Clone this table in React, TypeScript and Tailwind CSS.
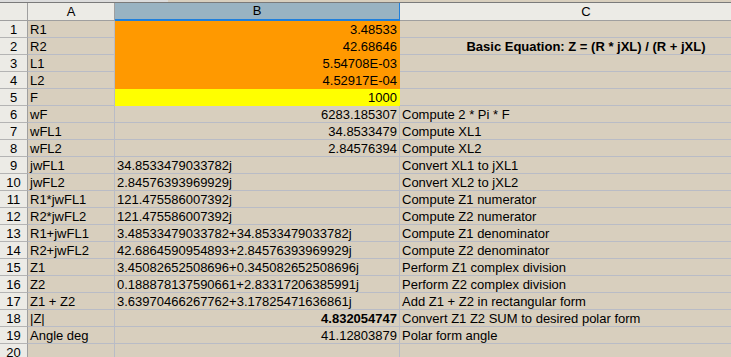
const rows: [string, string, "r" | "l" | "", string, string?][] = [
  ["R1", "3.48533", "r", "", "orange"],
  ["R2", "42.68646", "r", "", "orange"],
  ["L1", "5.54708E-03", "r", "", "orange"],
  ["L2", "4.52917E-04", "r", "", "orange"],
  ["F", "1000", "r", "", "yellow"],
  ["wF", "6283.185307", "r", "Compute 2 * Pi * F"],
  ["wFL1", "34.8533479", "r", "Compute XL1"],
  ["wFL2", "2.84576394", "r", "Compute XL2"],
  ["jwFL1", "34.8533479033782j", "l", "Convert XL1 to jXL1"],
  ["jwFL2", "2.84576393969929j", "l", "Convert XL2 to jXL2"],
  ["R1*jwFL1", "121.475586007392j", "l", "Compute Z1 numerator"],
  ["R2*jwFL2", "121.475586007392j", "l", "Compute Z2 numerator"],
  ["R1+jwFL1", "3.48533479033782+34.8533479033782j", "l", "Compute Z1 denominator"],
  ["R2+jwFL2", "42.6864590954893+2.84576393969929j", "l", "Compute Z2 denominator"],
  ["Z1", "3.45082652508696+0.345082652508696j", "l", "Perform Z1 complex division"],
  ["Z2", "0.188878137590661+2.83317206385991j", "l", "Perform Z2 complex division"],
  ["Z1 + Z2", "3.63970466267762+3.17825471636861j", "l", "Add Z1 + Z2 in rectangular form"],
  ["|Z|", "4.832054747", "r", "Convert Z1 Z2 SUM to desired polar form", "bold"],
  ["Angle deg", "41.12803879", "r", "Polar form angle"],
  ["", "", "", ""],
]

export default function App() {
  return (
    <div className="w-[731px] h-[357px] overflow-hidden bg-[#d8cfbe] text-[13px] leading-[16px] text-black font-['Liberation_Sans',Arial,sans-serif]">
      {/* window strip above the headers */}
      <div className="flex h-[2px]">
        <div className="w-[168px] bg-[#dcdcdc]" />
        <div className="flex-1 bg-[#d8cfbe]" />
      </div>
      <div className="h-px bg-[#7a7a7a]" />

      {/* column headers */}
      <div className="flex h-[18px] w-[772px]">
        <div className="w-[28px] shrink-0 bg-[#ecebe6] border-r border-b border-[#9f9f9f]" />
        <div className="w-[87px] shrink-0 bg-[#ecebe6] border-r border-b border-[#9f9f9f] text-center leading-[17px]">A</div>
        <div className="w-[285px] shrink-0 bg-[#99b3c2] border-r border-b-2 border-[#1f7fdc] text-center leading-[16px]">B</div>
        <div className="w-[372px] shrink-0 bg-[#ecebe6] border-b border-[#9f9f9f] text-center leading-[17px]">C</div>
      </div>

      {rows.map(([a, b, align, c, kind], i) => {
        const fill =
          kind === "orange"
            ? "bg-[#ff9900] border-[#ff9900]"
            : kind === "yellow"
              ? "bg-[#ffff00] border-[#ffff00]"
              : "border-[#b9bcc6]"
        return (
          <div key={i} className="flex h-[17px] w-[772px]">
            <div className="w-[28px] shrink-0 bg-[#ecebe6] border-r border-r-[#9f9f9f] border-b border-b-[#b4b4b4] text-center pt-px">
              {i + 1}
            </div>
            <div className="w-[87px] shrink-0 border-r border-b border-[#b9bcc6] pl-[2px] pt-px whitespace-nowrap">
              {a}
            </div>
            <div
              className={`w-[285px] shrink-0 border-r border-b ${fill} px-[2px] pt-px whitespace-nowrap overflow-hidden ${
                align === "r" ? "text-right" : "text-left"
              } ${kind === "bold" ? "font-bold" : ""}`}
            >
              {b}
            </div>
            <div
              className={`w-[372px] shrink-0 border-b border-[#b9bcc6] px-[2px] pt-px whitespace-nowrap ${
                i === 1 ? "text-center font-bold" : ""
              }`}
            >
              {i === 1 ? "Basic Equation: Z = (R * jXL) / (R + jXL)" : c}
            </div>
          </div>
        )
      })}
    </div>
  )
}
